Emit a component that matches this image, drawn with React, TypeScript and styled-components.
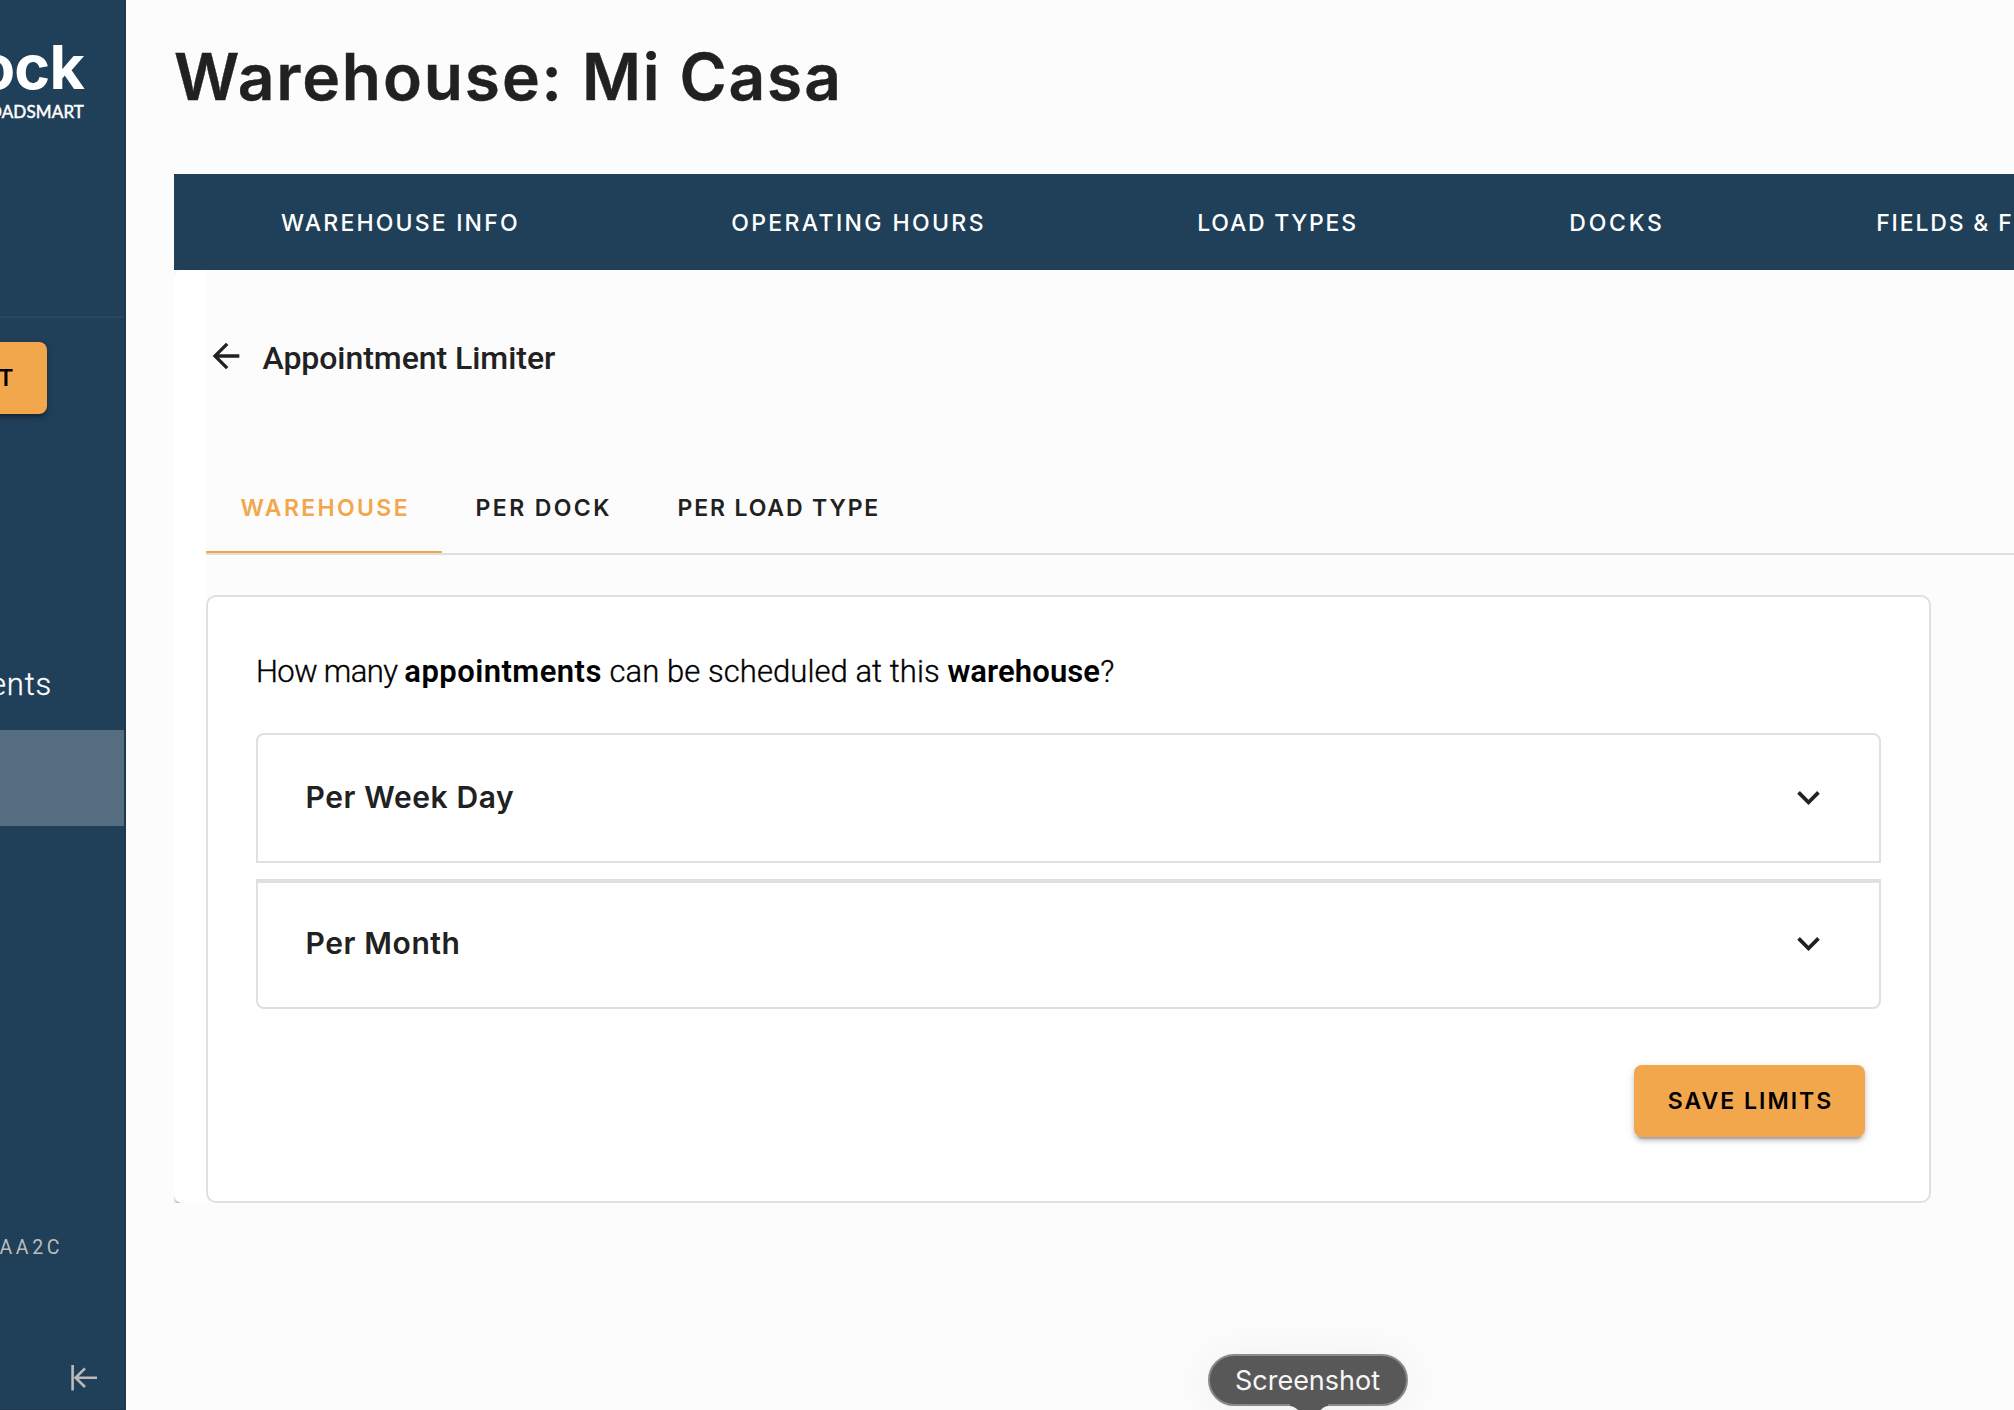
import React from "react";
import styled, { createGlobalStyle } from "styled-components";

const heading = '"Inter", "Liberation Sans", sans-serif';
const text = '"Roboto", "Liberation Sans", sans-serif';
const navy = "#203f58";
const orange = "#f2a74c";
const line = "#e0e0e0";
const ink = "#212121";

const GlobalStyle = createGlobalStyle`
  *, *::before, *::after { box-sizing: border-box; }
  body { margin: 0; background: #fcfcfc; overflow: hidden; }
`;

const Shell = styled.div`
  position: relative;
  display: flex;
  width: 2014px;
  height: 1410px;
  overflow: hidden;
  background: #fcfcfc;
  color: ${ink};
`;

/* ---------- Sidebar ---------- */

const Sidebar = styled.aside`
  display: flex;
  flex-direction: column;
  flex: none;
  width: 126px;
  overflow: hidden;
  background: ${navy};
  border-right: 2px solid #1d394e;
  border-bottom: 1px solid #1d394e;
`;

const Brand = styled.div`
  display: flex;
  flex-direction: column;
  align-items: flex-end;
  height: 318px;
  padding: 37px 40px 0 0;
  border-bottom: 2px solid #2b455a;
  color: #fff;
`;

const BrandName = styled.div`
  font: 700 61px/60px ${heading};
  letter-spacing: -0.8px;
`;

const BrandTag = styled.div`
  margin-top: 4px;
  font: 400 17px/22px "Lato", "Liberation Sans", sans-serif;
  letter-spacing: 0.15px;
  -webkit-text-stroke: 0.5px #fff;
`;

const Button = styled.button<{ $width: number }>`
  display: flex;
  align-items: center;
  justify-content: center;
  flex: none;
  width: ${(p) => p.$width}px;
  height: 72px;
  padding: 0 0 0 2px;
  border: 0;
  border-radius: 8px;
  background: ${orange};
  color: #000;
  font: 600 23px/32px ${heading};
  letter-spacing: 2px;
  white-space: nowrap;
  box-shadow: 0 6px 2px -4px rgba(0, 0, 0, 0.2), 0 4px 4px rgba(0, 0, 0, 0.14),
    0 2px 10px rgba(0, 0, 0, 0.12);
`;

const SideAction = styled.div`
  display: flex;
  justify-content: flex-end;
  width: 47px;
  margin-top: 24px;

  ${Button} {
    justify-content: flex-end;
    padding-right: 31.5px;
  }
`;

const Menu = styled.nav`
  display: flex;
  flex-direction: column;
  margin-top: 220px;
`;

const MenuItem = styled.div<{ $active?: boolean }>`
  display: flex;
  align-items: center;
  justify-content: flex-end;
  height: 96px;
  padding: 6px 72px 0 0;
  background: ${(p) => (p.$active ? "#566d80" : "transparent")};
  color: #fff;
  font: 300 31px/40px ${text};
  letter-spacing: 0.8px;
  -webkit-text-stroke: 0.3px #fff;
`;

const Account = styled.div`
  display: flex;
  justify-content: flex-end;
  width: 63px;
  margin-top: 406px;
  color: #bcbcbc;
  font: 400 19.5px/32px ${text};
  letter-spacing: 3.6px;
`;

const Collapse = styled.div`
  display: flex;
  margin: 100px 0 0 70px;
`;

/* ---------- Main ---------- */

const Main = styled.main`
  display: flex;
  flex-direction: column;
  flex: 1;
  min-width: 0;
  padding-left: 48px;
`;

const Title = styled.h1`
  height: 174px;
  margin: 0;
  padding-top: 37px;
  font: 600 64px/80px ${heading};
  letter-spacing: 1.88px;
  white-space: nowrap;
  -webkit-text-stroke: 0.4px ${ink};
`;

const NavBar = styled.nav`
  display: flex;
  align-items: center;
  flex: none;
  gap: 211.4px;
  height: 96px;
  padding: 1px 0 0 107px;
  overflow: hidden;
  background: ${navy};
  color: #fff;
`;

const NavItem = styled.a<{ $tracking: number }>`
  flex: none;
  font: 500 23px/32px ${heading};
  letter-spacing: ${(p) => p.$tracking}px;
  white-space: nowrap;
`;

const PanelClip = styled.div`
  overflow: hidden;
`;

const Panel = styled.section`
  height: 933px;
  padding-left: 32px;
  border-radius: 8px;
  background: #fff;
  box-shadow: 0 4px 2px -2px rgba(0, 0, 0, 0.2), 0 2px 2px rgba(0, 0, 0, 0.14),
    0 2px 6px rgba(0, 0, 0, 0.12);
`;

const PanelBody = styled.div`
  height: 100%;
  background: #fcfcfc;
`;

const BackRow = styled.div`
  display: flex;
  align-items: center;
  gap: 17px;
  height: 172px;

  svg {
    margin-left: -0.5px;
  }
`;

const SectionName = styled.h2`
  margin: 0;
  padding-top: 4px;
  font: 500 32px/40px ${text};
  letter-spacing: -0.05px;
`;

const Tabs = styled.div`
  display: flex;
  height: 113px;
  padding-top: 20px;
  border-bottom: 2px solid #dedfdf;
`;

const Tab = styled.div<{ $width: number; $tracking: number; $active?: boolean }>`
  display: flex;
  align-items: center;
  width: ${(p) => p.$width}px;
  padding-left: ${(p) => (p.$active ? 34.5 : 33.6)}px;
  font: 600 23px/32px ${heading};
  letter-spacing: ${(p) => p.$tracking}px;
  white-space: nowrap;
  color: ${(p) => (p.$active ? orange : ink)};
  box-shadow: ${(p) => (p.$active ? `inset 0 -2px ${orange}` : "none")};
`;

const Card = styled.div`
  display: flex;
  flex-direction: column;
  width: 1725px;
  height: 608px;
  margin-top: 40px;
  padding: 0 48px;
  border: 2px solid ${line};
  border-radius: 10px;
  background: #fff;
`;

const Question = styled.p`
  height: 136px;
  margin: 0;
  padding-top: 13px;
  color: #000;
  font: 300 31px/124px ${text};
  white-space: pre;
`;

const Words = styled.span<{ $tracking: number; $strong?: boolean }>`
  font-weight: ${(p) => (p.$strong ? 600 : 300)};
  letter-spacing: ${(p) => p.$tracking}px;
  -webkit-text-stroke: ${(p) => (p.$strong ? 0 : 0.35)}px #000;
`;

const Accordion = styled.div`
  display: flex;
  align-items: center;
  justify-content: space-between;
  flex: none;
  height: 130px;
  padding: 0 48px 2px 47.5px;
  border: 2px solid ${line};
  font: 600 30px/40px ${heading};
  letter-spacing: 0.6px;

  &:first-child {
    border-radius: 8px 8px 0 0;
  }
  &:last-child {
    padding-bottom: 4px;
    border-top-width: 4px;
    border-radius: 0 0 8px 8px;
  }
`;

const AccordionList = styled.div`
  display: flex;
  flex-direction: column;
  gap: 16px;
`;

const Actions = styled.div`
  display: flex;
  justify-content: flex-end;
  margin-top: 56px;
  padding-right: 16px;
`;

/* ---------- Dock tooltip ---------- */

const Tooltip = styled.div`
  position: absolute;
  left: 1208px;
  top: 1354px;
  display: flex;
  align-items: center;
  justify-content: center;
  width: 200px;
  height: 52px;
  padding: 1px 1px 0 0;
  border: 2px solid #8a8a8a;
  border-radius: 26px;
  background: #585858;
  color: #f6f6f6;
  font: 400 27px/32px ${heading};
  box-shadow: 0 4px 44px rgba(0, 0, 0, 0.06);
`;

const TooltipTail = styled.svg`
  position: absolute;
  left: 80px;
  top: 48px;
`;

const ArrowBack = () => (
  <svg width="40" height="40" viewBox="0 0 24 24" fill={ink}>
    <path d="M20 11H7.83l5.59-5.59L12 4l-8 8 8 8 1.41-1.41L7.83 13H20v-2z" />
  </svg>
);

const ExpandMore = () => (
  <svg width="45" height="45" viewBox="0 0 24 24" fill={ink}>
    <path d="M16.59 8.59L12 13.17 7.41 8.59 6 10l6 6 6-6z" />
  </svg>
);

const CollapseIcon = () => (
  <svg width="28" height="28" viewBox="0 0 28 28" fill="none" stroke="#bdb9b9" strokeWidth="2.6">
    <path d="M2.6 1v25.5M27 13.7H5.4M15 4.4l-9.4 9.3 9.4 9.3" />
  </svg>
);

const navItems = [
  { label: "WAREHOUSE INFO", tracking: 2.18 },
  { label: "OPERATING HOURS", tracking: 2.38 },
  { label: "LOAD TYPES", tracking: 1.75 },
  { label: "DOCKS", tracking: 2.8 },
  { label: "FIELDS & F", tracking: 1.84 },
];

const tabs = [
  { label: "WAREHOUSE", width: 236, tracking: 2.36, active: true },
  { label: "PER DOCK", width: 202, tracking: 2.4 },
  { label: "PER LOAD TYPE", width: 270, tracking: 1.85 },
];

export default function App() {
  return (
    <>
      <GlobalStyle />
      <Shell>
        <Sidebar>
          <Brand>
            <BrandName>ock</BrandName>
            <BrandTag>OADSMART</BrandTag>
          </Brand>
          <SideAction>
            <Button $width={120}>T</Button>
          </SideAction>
          <Menu>
            <MenuItem>ents</MenuItem>
            <MenuItem $active />
          </Menu>
          <Account>AA2C</Account>
          <Collapse>
            <CollapseIcon />
          </Collapse>
        </Sidebar>
        <Main>
          <Title>Warehouse: Mi Casa</Title>
          <NavBar>
            {navItems.map((n) => (
              <NavItem key={n.label} $tracking={n.tracking}>
                {n.label}
              </NavItem>
            ))}
          </NavBar>
          <PanelClip>
            <Panel>
              <PanelBody>
                <BackRow>
                  <ArrowBack />
                  <SectionName>Appointment Limiter</SectionName>
                </BackRow>
                <Tabs>
                  {tabs.map((t) => (
                    <Tab key={t.label} $width={t.width} $tracking={t.tracking} $active={t.active}>
                      {t.label}
                    </Tab>
                  ))}
                </Tabs>
                <Card>
                  <Question>
                    <Words $tracking={-0.6}>{"How many "}</Words>
                    <Words $tracking={0.45} $strong>appointments</Words>
                    <Words $tracking={0.07}>{" can be scheduled at this "}</Words>
                    <Words $tracking={0.1} $strong>warehouse</Words>
                    <Words $tracking={0}>?</Words>
                  </Question>
                  <AccordionList>
                    <Accordion>
                      Per Week Day
                      <ExpandMore />
                    </Accordion>
                    <Accordion>
                      Per Month
                      <ExpandMore />
                    </Accordion>
                  </AccordionList>
                  <Actions>
                    <Button $width={231}>SAVE LIMITS</Button>
                  </Actions>
                </Card>
              </PanelBody>
            </Panel>
          </PanelClip>
        </Main>
        <Tooltip>
          Screenshot
          <TooltipTail width="40" height="10" viewBox="0 0 40 10" fill="#585858">
            <path d="M0 0h38v2c-6 1-7 4-11 8H12C8 6 6 3 0 2z" />
          </TooltipTail>
        </Tooltip>
      </Shell>
    </>
  );
}
